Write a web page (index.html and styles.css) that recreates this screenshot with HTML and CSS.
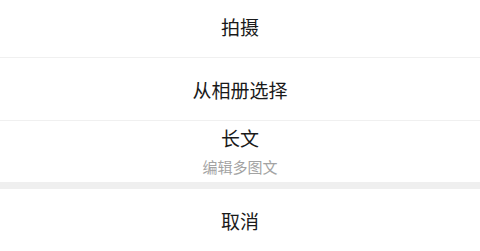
FILE: index.html
```html
<!DOCTYPE html>
<html lang="zh-CN">
<head>
    <meta charset="UTF-8">
    <meta name="viewport" content="width=device-width, initial-scale=1.0">
    <title>Action Sheet</title>
    <link rel="stylesheet" href="styles.css">
</head>
<body>
    <div class="sheet">
        <div class="sheet-group">
            <button class="sheet-item item-first">拍摄</button>
            <button class="sheet-item item-second">从相册选择</button>
            <button class="sheet-item item-long">
                <span class="item-title">长文</span>
                <span class="item-sub">编辑多图文</span>
            </button>
        </div>
        <div class="sheet-gap"></div>
        <button class="sheet-item item-cancel">取消</button>
    </div>
</body>
</html>
```

FILE: styles.css
```css
body {
    margin: 0;
    background-color: #ffffff;
    font-family: "Noto Sans CJK SC", "Noto Sans", sans-serif;
}

.sheet {
    display: flex;
    flex-direction: column;
    width: 480px;
    height: 251px;
    overflow: hidden;
}

.sheet-group {
    display: flex;
    flex-direction: column;
}

.sheet-item {
    display: flex;
    flex-direction: column;
    align-items: center;
    justify-content: center;
    box-sizing: border-box;
    width: 100%;
    margin: 0;
    padding: 0;
    border: none;
    background: #ffffff;
    font-family: inherit;
    font-size: 19px;
    color: #1a1a1a;
    cursor: pointer;
}

.item-first {
    height: 58px;
    padding-bottom: 4px;
    border-bottom: 1px solid #f0f0f0;
}

.item-second {
    height: 63px;
    border-bottom: 1px solid #f0f0f0;
}

.item-long {
    height: 61px;
    justify-content: flex-start;
    padding-top: 5px;
}

.item-title {
    line-height: 24px;
}

.item-sub {
    margin-top: 7px;
    font-size: 15px;
    line-height: 20px;
    color: #a3a3a3;
}

.sheet-gap {
    height: 7px;
    background-color: #efefef;
}

.item-cancel {
    height: 62px;
}
```
